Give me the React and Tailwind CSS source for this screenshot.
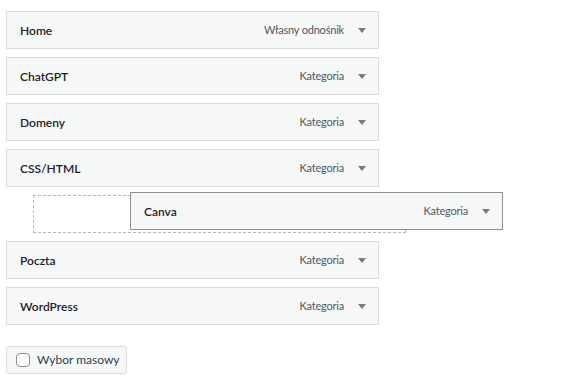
import React from "react";

const items = [
  { title: "Home", type: "Własny odnośnik" },
  { title: "ChatGPT", type: "Kategoria" },
  { title: "Domeny", type: "Kategoria" },
  { title: "CSS/HTML", type: "Kategoria" },
  { placeholder: true },
  { title: "Poczta", type: "Kategoria" },
  { title: "WordPress", type: "Kategoria" },
];

function Arrow() {
  return (
    <svg width="8" height="5" viewBox="0 0 8 5" className="block">
      <path d="M0 0 L8 0 L4 5 Z" fill="#787c82" />
    </svg>
  );
}

function Row({ title, type, border }) {
  return (
    <div
      className={`flex h-[38px] w-[373px] items-center justify-between border ${border} bg-[#f6f7f7] pl-[13px] pr-[12px]`}
    >
      <span className="pt-[1px] text-[12px] font-semibold text-[#1d2327]">{title}</span>
      <div className="flex items-center gap-[14px]">
        <span className="pt-[1px] text-[11px] tracking-[-0.2px] text-[#50575e]">{type}</span>
        <Arrow />
      </div>
    </div>
  );
}

export default function App() {
  return (
    <div
      className="relative min-h-[380px] w-[571px] bg-white pl-[6px] pt-[11px]"
      style={{ fontFamily: 'Lato, "Noto Sans", sans-serif' }}
    >
      <div className="flex flex-col gap-[8px]">
        {items.map((it, i) =>
          it.placeholder ? (
            <div
              key={i}
              className="ml-[27px] h-[38px] w-[373px] border border-dashed border-[#b4b9be]"
            />
          ) : (
            <Row key={i} title={it.title} type={it.type} border="border-[#dcdcde]" />
          )
        )}
      </div>
      <div className="absolute left-[130px] top-[192px]">
        <Row title="Canva" type="Kategoria" border="border-[#8c8f94]" />
      </div>
      <div className="mt-[21px] flex h-[28px] w-[121px] items-center gap-[7px] whitespace-nowrap rounded-[3px] border border-[#dcdcde] bg-[#f6f7f7] pl-[9px]">
        <span className="block h-[14px] w-[14px] shrink-0 rounded-[4px] border border-[#8c8f94] bg-white" />
        <span className="text-[12px] text-[#2c3e50]">Wybor masowy</span>
      </div>
    </div>
  );
}
